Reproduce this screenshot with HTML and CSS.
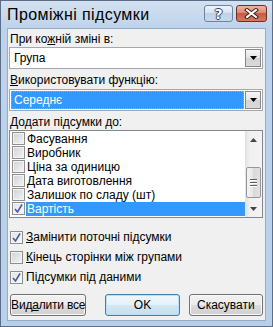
FILE: index.html
```html
<!DOCTYPE html>
<html lang="uk">
<head>
<meta charset="utf-8">
<title>Проміжні підсумки</title>
<link rel="stylesheet" href="styles.css">
</head>
<body>

<div class="window">
	<div class="titlebar">
		<span class="title">Проміжні підсумки</span>
		<span class="cap-btn help">?</span>
		<span class="cap-btn close">
			<svg width="15" height="11" viewBox="0 0 15 11">
				<path d="M3 2l9 7M12 2l-9 7" stroke="#3b1a14" stroke-width="4" stroke-linecap="square"/>
				<path d="M3 2l9 7M12 2l-9 7" stroke="#fff" stroke-width="2" stroke-linecap="square"/>
			</svg>
		</span>
	</div>

	<div class="client">
		<div class="label">При ко<u>ж</u>ній зміні в:</div>
		<div class="combo">
			<span class="combo-value">Група</span>
			<span class="combo-drop"><svg width="7" height="4"><path d="M0 0h7l-3.5 4z"/></svg></span>
		</div>

		<div class="label label-gap"><u>В</u>икористовувати функцію:</div>
		<div class="combo combo-focus">
			<span class="combo-value"><span class="sel">Середнє</span></span>
			<span class="combo-drop"><svg width="7" height="4"><path d="M0 0h7l-3.5 4z"/></svg></span>
		</div>

		<div class="label label-gap"><u>Д</u>одати підсумки до:</div>
		<div class="listbox">
			<ul class="items">
				<li><span class="check"></span><span class="text">Фасування</span></li>
				<li><span class="check"></span><span class="text">Виробник</span></li>
				<li><span class="check"></span><span class="text">Ціна за одиницю</span></li>
				<li><span class="check"></span><span class="text">Дата виготовлення</span></li>
				<li><span class="check"></span><span class="text">Залишок по сладу (шт)</span></li>
				<li class="selected"><span class="check checked"><svg width="9" height="9" viewBox="0 0 9 9"><path d="M1 5l2.5 3L8 0.5" fill="none" stroke="#4a5f97" stroke-width="1.6"/></svg></span><span class="text">Вартість</span></li>
			</ul>
			<div class="scrollbar">
				<span class="sb-btn"><svg width="7" height="4"><path d="M3.5 0L7 4H0z"/></svg></span>
				<div class="sb-track">
					<span class="sb-thumb"><i></i><i></i><i></i></span>
				</div>
				<span class="sb-btn"><svg width="7" height="4"><path d="M0 0h7l-3.5 4z"/></svg></span>
			</div>
		</div>

		<div class="options">
			<div class="option"><span class="check checked"><svg width="9" height="9" viewBox="0 0 9 9"><path d="M1 5l2.5 3L8 0.5" fill="none" stroke="#4a5f97" stroke-width="1.6"/></svg></span><span><u>З</u>амінити поточні підсумки</span></div>
			<div class="option"><span class="check"></span><span><u>К</u>інець сторінки між групами</span></div>
			<div class="option"><span class="check checked"><svg width="9" height="9" viewBox="0 0 9 9"><path d="M1 5l2.5 3L8 0.5" fill="none" stroke="#4a5f97" stroke-width="1.6"/></svg></span><span>Підсумки під даними</span></div>
		</div>

		<div class="buttons">
			<button class="btn btn-wide">Вид<u>а</u>лити все</button>
			<button class="btn btn-default">OK</button>
			<button class="btn btn-cancel">Скасувати</button>
		</div>
	</div>
</div>

</body>
</html>
```

FILE: styles.css
```css
body {
	margin: 0;
	font-family: "Liberation Sans", Arial, sans-serif;
	font-size: 12px;
	color: #000;
}

.window {
	width: 273px;
	height: 327px;
	box-sizing: border-box;
	border: 1px solid #5c6e87;
	background: linear-gradient(#d3e1f1, #bed3eb 27px, #b9d0ea);
	display: flex;
	flex-direction: column;
	padding: 0 6px 5px 6px;
}

.titlebar {
	height: 27px;
	display: flex;
	align-items: flex-start;
	flex-shrink: 0;
}

.title {
	font-size: 16px;
	letter-spacing: 0.4px;
	line-height: 18px;
	padding-top: 5px;
	flex: 1;
}

.cap-btn {
	box-sizing: border-box;
	height: 17px;
	margin-top: 4px;
	border-radius: 3px;
	display: flex;
	align-items: center;
	justify-content: center;
}

.help {
	width: 29px;
	margin-right: 3px;
	border: 1px solid #6d83a1;
	background: linear-gradient(#eef3fa, #d4e1f1 50%, #bfd1e8 50%, #c8d9ee);
	color: #fff;
	font-weight: bold;
	font-size: 14px;
	font-family: "DejaVu Sans", sans-serif;
	text-shadow: 1px 0 #33435e, -1px 0 #33435e, 0 1px #33435e, 0 -1px #33435e;
}

.close {
	width: 31px;
	margin-right: -1px;
	border: 1px solid #6e2f25;
	background: linear-gradient(#eeb3a4, #d98671 50%, #c75a43 50%, #d57a5f);
}

.client {
	flex: 1;
	background: #f0f0f0;
	border: 1px solid #97acc6;
	padding: 3px 2px 0 1px;
	display: flex;
	flex-direction: column;
}

.label {
	line-height: 15px;
	height: 15px;
	padding-left: 1px;
}

.label-gap {
	margin-top: 4px;
}

.combo {
	height: 22px;
	box-sizing: border-box;
	border: 1px solid #a4a8ae;
	background: #fff;
	display: flex;
}

.combo-focus {
	margin-top: 1px;
}

.combo-value {
	flex: 1;
	display: flex;
	align-items: center;
	padding: 1px 1px 1px 4px;
}

.combo-focus .combo-value {
	padding-left: 1px;
}

.sel {
	flex: 1;
	align-self: stretch;
	display: flex;
	align-items: center;
	padding-left: 2px;
	background: #3399ff;
	color: #fff;
	border: 1px dotted #e9a04e;
}

.combo-drop {
	box-sizing: border-box;
	width: 16px;
	margin: 1px 1px 1px 0;
	border: 1px solid #888;
	background: linear-gradient(#f6f6f6, #e4e4e4 50%, #d4d4d4 50%, #dadada);
	display: flex;
	align-items: center;
	justify-content: center;
}

.combo-drop svg {
	fill: #000;
}

.listbox {
	height: 88px;
	box-sizing: border-box;
	border: 1px solid #828790;
	background: #fff;
	display: flex;
}

.items {
	flex: 1;
	list-style: none;
	margin: 0;
	padding: 1px 0 0 2px;
}

.items li {
	height: 14px;
	display: flex;
	align-items: flex-start;
	line-height: 14px;
}

.items .text {
	margin-left: 1px;
	padding-left: 1px;
	flex: 1;
}

.items .selected .text {
	background: #3399ff;
	color: #fff;
}

.check {
	box-sizing: border-box;
	width: 13px;
	height: 13px;
	border: 1px solid #8e8f8f;
	background: linear-gradient(135deg, #cfd2d6, #f4f4f4);
	box-shadow: inset 0 0 0 1px #f4f4f4;
	display: flex;
	align-items: center;
	justify-content: center;
	flex-shrink: 0;
}

.check.checked {
	background: linear-gradient(135deg, #dfe3ea, #fafafa);
}

.scrollbar {
	width: 17px;
	background: linear-gradient(90deg, #e2e2e2, #f0f0f0 30%, #f3f3f3);
	display: flex;
	flex-direction: column;
}

.sb-btn {
	height: 17px;
	display: flex;
	align-items: center;
	justify-content: center;
}

.sb-btn svg {
	fill: #444;
}

.sb-track {
	flex: 1;
	padding-top: 19px;
}

.sb-thumb {
	box-sizing: border-box;
	display: flex;
	flex-direction: column;
	align-items: center;
	justify-content: center;
	gap: 1px;
	height: 31px;
	margin: 0 0 0 1px;
	width: 15px;
	border: 1px solid #979797;
	border-radius: 2px;
	background: linear-gradient(90deg, #f3f3f3, #e6e6e6 50%, #d8d8d8 50%, #e2e2e2);
}

.sb-thumb i {
	display: block;
	width: 7px;
	height: 1px;
	background: #5f5f5f;
	border-bottom: 1px solid #fff;
}

.options {
	margin-top: 9px;
	display: flex;
	flex-direction: column;
}

.option {
	height: 20px;
	display: flex;
	align-items: center;
	gap: 3px;
	padding-left: 1px;
}

.buttons {
	margin-top: 7px;
	display: flex;
	padding-left: 1px;
}

.btn {
	width: 75px;
	height: 22px;
	box-sizing: border-box;
	padding: 0;
	white-space: nowrap;
	font-family: "Liberation Sans", Arial, sans-serif;
	font-size: 12px;
	color: #000;
	border: 1px solid #707070;
	border-radius: 3px;
	background: linear-gradient(#f2f2f2, #ebebeb 50%, #dddddd 50%, #cfcfcf);
	box-shadow: inset 0 0 0 1px #fafafa;
}

.btn-wide {
	width: 77px;
	letter-spacing: -0.2px;
}

.btn-default {
	margin-left: 19px;
	border-color: #3c7fb1;
	box-shadow: inset 0 0 0 1px #b6e2f8;
	background: linear-gradient(#f0f7fb, #e4f1f9 50%, #d3e7f4 50%, #c5def0);
}

.btn-cancel {
	margin-left: 9px;
}
```
